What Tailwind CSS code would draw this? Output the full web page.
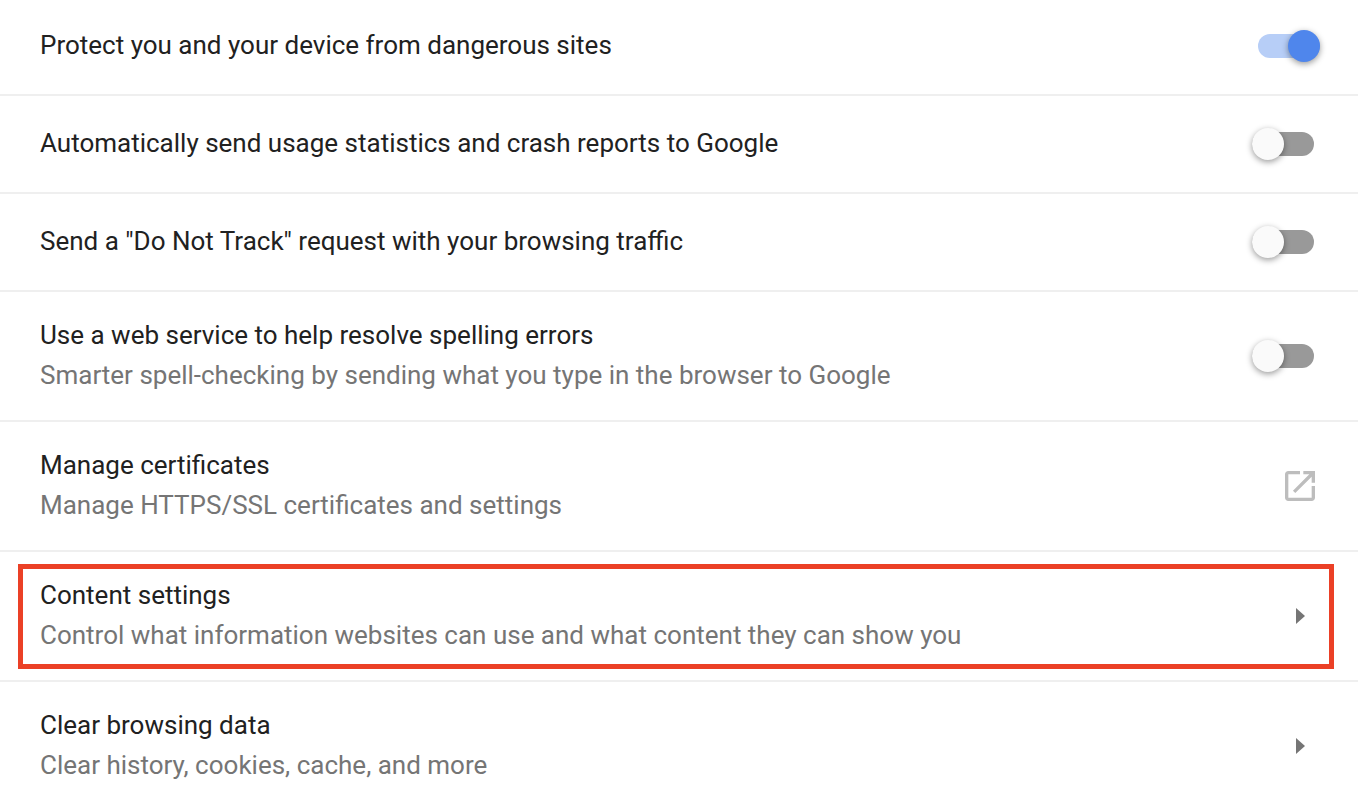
<!DOCTYPE html>
<html lang="en">
<head>
    <meta charset="UTF-8">
    <meta name="viewport" content="width=device-width, initial-scale=1.0">
    <title>Privacy Settings</title>
    <script src="https://cdn.jsdelivr.net/npm/@tailwindcss/browser@4"></script>
</head>
<body class="bg-white font-[Roboto,sans-serif] text-[26px] leading-10 text-[#212121]">
    <main class="divide-y-2 divide-[#efefef]">
        <!-- Toggles -->
        <div class="flex items-center justify-between h-24 pl-10 pr-[38px] pb-1">
            <label for="safe_browsing">Protect you and your device from dangerous sites</label>
            <span class="relative flex items-center h-8 w-[62px] mt-0.5">
                <input type="checkbox" id="safe_browsing" role="switch" checked class="peer appearance-none h-6 w-full rounded-full bg-[#999999] checked:bg-[#b7cef7]">
                <span class="absolute left-0 size-8 rounded-full bg-[#fafafa] shadow-[0_2px_6px_rgba(0,0,0,0.4)] pointer-events-none peer-checked:left-auto peer-checked:right-0 peer-checked:bg-[#4f86ec]"></span>
            </span>
        </div>
        <div class="flex items-center justify-between h-[98px] pl-10 pr-11 pb-0.5">
            <label for="usage_stats">Automatically send usage statistics and crash reports to Google</label>
            <span class="relative flex items-center h-8 w-[62px] mt-0.5">
                <input type="checkbox" id="usage_stats" role="switch" class="peer appearance-none h-6 w-full rounded-full bg-[#999999] checked:bg-[#b7cef7]">
                <span class="absolute left-0 size-8 rounded-full bg-[#fafafa] shadow-[0_2px_6px_rgba(0,0,0,0.4)] pointer-events-none peer-checked:left-auto peer-checked:right-0 peer-checked:bg-[#4f86ec]"></span>
            </span>
        </div>
        <div class="flex items-center justify-between h-[98px] pl-10 pr-11 pb-0.5">
            <label for="do_not_track">Send a "Do Not Track" request with your browsing traffic</label>
            <span class="relative flex items-center h-8 w-[62px] mt-0.5">
                <input type="checkbox" id="do_not_track" role="switch" class="peer appearance-none h-6 w-full rounded-full bg-[#999999] checked:bg-[#b7cef7]">
                <span class="absolute left-0 size-8 rounded-full bg-[#fafafa] shadow-[0_2px_6px_rgba(0,0,0,0.4)] pointer-events-none peer-checked:left-auto peer-checked:right-0 peer-checked:bg-[#4f86ec]"></span>
            </span>
        </div>
        <div class="flex items-center justify-between h-[130px] pl-10 pr-11 pb-0.5">
            <label for="spelling">
                <span class="block">Use a web service to help resolve spelling errors</span>
                <span class="block text-[#757575]">Smarter spell-checking by sending what you type in the browser to Google</span>
            </label>
            <span class="relative flex items-center h-8 w-[62px] mt-0.5">
                <input type="checkbox" id="spelling" role="switch" class="peer appearance-none h-6 w-full rounded-full bg-[#999999] checked:bg-[#b7cef7]">
                <span class="absolute left-0 size-8 rounded-full bg-[#fafafa] shadow-[0_2px_6px_rgba(0,0,0,0.4)] pointer-events-none peer-checked:left-auto peer-checked:right-0 peer-checked:bg-[#4f86ec]"></span>
            </span>
        </div>

        <!-- Links to other pages -->
        <div class="h-[130px]">
            <a href="#certificates" class="flex items-center justify-between h-full pl-10 pr-[38px] pb-0.5">
                <span>
                    <span class="block">Manage certificates</span>
                    <span class="block text-[#757575]">Manage HTTPS/SSL certificates and settings</span>
                </span>
                <svg class="size-10 mt-0.5" viewBox="0 0 24 24" fill="#bdbdbd" aria-hidden="true"><path d="M19 19H5V5h7V3H5c-1.11 0-2 .9-2 2v14c0 1.1.89 2 2 2h14c1.1 0 2-.9 2-2v-7h-2v7zM14 3v2h3.590l-9.830 9.830 1.410 1.410L19 6.410V10h2V3h-7z"/></svg>
            </a>
        </div>
        <div class="h-[130px] pt-3 pb-[11px] pl-[18px] pr-6">
            <a href="#content" class="flex items-center justify-between h-full border-5 border-[#eb4026] pl-[17px] pr-6 pb-1">
                <span>
                    <span class="block">Content settings</span>
                    <span class="block text-[#757575]">Control what information websites can use and what content they can show you</span>
                </span>
                <svg class="w-[9px] h-4 mt-0.5" viewBox="0 0 9 16" fill="#757575" aria-hidden="true"><path d="M0 0l9 8-9 8z"/></svg>
            </a>
        </div>
        <div class="h-[130px]">
            <a href="#clear" class="flex items-center justify-between h-full pl-10 pr-[53px] pb-1">
                <span>
                    <span class="block">Clear browsing data</span>
                    <span class="block text-[#757575]">Clear history, cookies, cache, and more</span>
                </span>
                <svg class="w-[9px] h-4 mt-0.5" viewBox="0 0 9 16" fill="#757575" aria-hidden="true"><path d="M0 0l9 8-9 8z"/></svg>
            </a>
        </div>
    </main>
</body>
</html>
